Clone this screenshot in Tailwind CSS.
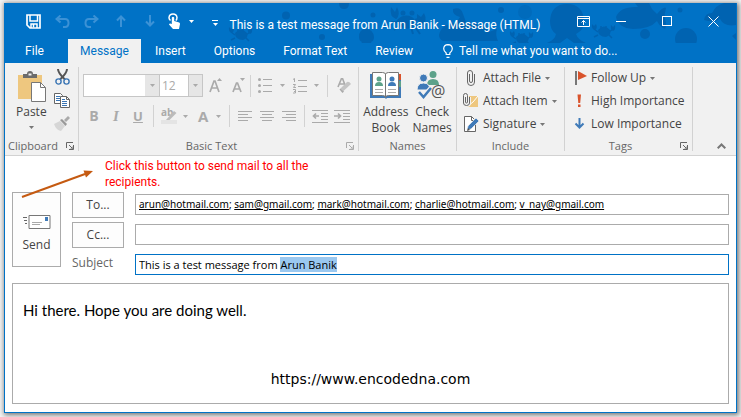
<!DOCTYPE html>
<html lang="en">
<head>
<meta charset="utf-8">
<title>This is a test message from Arun Banik - Message (HTML)</title>
<script src="https://cdn.jsdelivr.net/npm/@tailwindcss/browser@4"></script>
</head>
<body class="bg-[#f4f4f4] font-['Open_Sans','Noto_Sans',sans-serif] text-[12px] leading-4 text-[#444]">
<svg class="hidden">
  <symbol id="caret" viewBox="0 0 5 3"><path d="M0 0h5L2.500 3z" fill="currentColor"/></symbol>
  <symbol id="launcher" viewBox="0 0 8 8"><path d="M.5 6V.5H7M3 3l3 3M7.500 3v4.500H3M7 4.500V7H4.500" fill="none" stroke="currentColor"/></symbol>
</svg>
<div class="flex min-h-screen flex-col px-1 pt-[3px] pb-1">
<main class="flex flex-1 flex-col border border-[#0072c6] bg-white shadow-[1px_1px_5px_1px_#777]">

  <header class="relative -mt-px bg-[#0072c6] font-['Roboto','Open_Sans',sans-serif] text-white">
    <svg class="absolute top-0 right-0 h-10 w-[512px] text-[#0063b1]" viewBox="224 3 512 40" fill="currentColor" aria-hidden="true">
      <g id="crab"><path d="M235 33q6-7 12 0q2 5-4 7q-8 0-8-7z"/><path d="M235 35l-4-3M235 38l-4 2M246 35l4-3M246 38l3 3M238 32v-3M243 32v-3" stroke="currentColor" stroke-width="1.500"/><path d="M229 27l2 2 2-2q2 4-1 6-4-1-3-6zM248 28l2 2 2-2q1 5-2 6-3-2-2-6z"/></g>
      <circle cx="286" cy="15.500" r="4"/><path d="M339 3h10q0 6-5 6t-5-6z"/><circle cx="322" cy="37" r="3"/><circle cx="373" cy="15" r="2.500"/>
      <path d="M359 37q0-8 7-8t8 8q0 4-3 5 1 3 5 3v2h-6l-3-4-3 4h-6v-2q3-1 4-3-3-1-3-5z"/>
      <path d="M397 20q7-7 15-3 5 3 2 9-5 5-13 1-6-3-4-7z"/><circle cx="403" cy="13" r="2.500"/><circle cx="412" cy="13" r="2.500"/>
      <path d="M391 7l4 5 2-5q4 8-1 12-7-3-5-12zM417 14l4 3 3-4q4 8-2 12-6-4-5-11z"/><path d="M397 18l-5-3M398 22h-7M400 25l-6 5M414 25l6 9M411 27l2 7M415 20l6-2" stroke="currentColor" stroke-width="2"/>
      <path d="M439 35q2-11 17-12l4-6q-8-2-7-8 8-3 10 5l3 8q18 2 23 10l8-3q-2 6 1 12H443q-4-2-4-6z"/>
      <circle cx="501" cy="10" r="3"/><circle cx="525" cy="12" r="7" opacity=".5"/>
      <use href="#crab" transform="translate(281 4)"/><use href="#crab" transform="translate(363 -3)"/>
      <path d="M550 21q1-17 17-17t17 17q0 8-5 11l-3 2q2 6 10 9h-12l-7-5-7 5h-13q8-3 9-9-6-4-6-13z"/>
      <path d="M616 17q4-11 22-10l-3-4h14l3 6 5 5q7-8 9-6-2 6-1 11 2 6 0 10-5-2-8-8-7 8-24 8-15-1-17-12z"/>
      <circle cx="645" cy="34" r="5"/><circle cx="686" cy="39" r="11"/><circle cx="680" cy="10" r="2.500"/>
      <path d="M704 20q1-7 8-7 4-8 12-10h12v22q-12 2-16-6-6 4-16 1z"/><path d="M732 36l4-3v7z"/>
    </svg>
    <div class="relative flex h-9 items-center">
      <div class="flex items-center pl-[14px]">
        <button aria-label="Save" class="flex w-[29px] justify-center"><svg width="15" height="15" viewBox="0 0 15 15"><path d="M1 1h13v13H4l-3-3z" fill="none" stroke="#fff" stroke-width="1.700"/><path d="M4 1v6h7.500V1M5 14v-4h6v4M7.500 10.500v3" fill="none" stroke="#fff" stroke-width="1.500"/></svg></button>
        <button aria-label="Undo" class="flex w-[29px] justify-center text-[#3c92d6]"><svg width="15" height="13" viewBox="0 0 15 13" fill="none" stroke="currentColor" stroke-width="2"><path d="M5.500.5L1.500 4l4 3.500M2 4h8q3.500 0 3.500 4T10 12H8"/></svg></button>
        <button aria-label="Redo" class="flex w-[29px] justify-center text-[#3c92d6]"><svg width="15" height="13" viewBox="0 0 15 13" fill="none" stroke="currentColor" stroke-width="2"><path d="M9.500.5l4 3.500-4 3.500M13 4H5Q1.500 4 1.500 8T5 12h2"/></svg></button>
        <button aria-label="Previous item" class="flex w-[29px] justify-center text-[#3c92d6]"><svg width="10" height="12" viewBox="0 0 10 12" fill="none" stroke="currentColor" stroke-width="2"><path d="M5 12V1.500M1 5.500l4-4 4 4"/></svg></button>
        <button aria-label="Next item" class="flex w-[29px] justify-center text-[#3c92d6]"><svg width="10" height="12" viewBox="0 0 10 12" fill="none" stroke="currentColor" stroke-width="2"><path d="M5 0v10.500M1 6.500l4 4 4-4"/></svg></button>
        <button aria-label="Touch mode" class="flex items-center gap-2 pl-1"><svg width="13" height="17" viewBox="0 0 13 17"><path d="M2.500 7.500Q.8 6 1 4.500 1.500 1 5 1t4 3.500Q9 6.500 7.800 7.500" fill="none" stroke="#fff" stroke-width="1.500"/><path d="M3.800 4.500q1.200-1.500 2.400 0V8l5 1.500q1 .5.800 1.500l-1 5H5L1 11.500q.3-1.500 2.800-.5z" fill="#fff"/></svg><svg class="h-[3px] w-[5px]"><use href="#caret"/></svg></button>
        <button aria-label="Customize toolbar" class="flex flex-col items-center gap-[2px] pt-1 pl-[18px]"><span class="h-px w-[6px] bg-white"></span><svg class="h-[3px] w-[5px]"><use href="#caret"/></svg></button>
      </div>
      <h1 class="flex-1 pt-2 pr-4 text-center whitespace-nowrap">This is a test message from Arun Banik - Message (HTML)</h1>
      <button aria-label="Ribbon display options" class="flex w-[30px] justify-center"><svg width="13" height="11" viewBox="0 0 13 11" fill="none" stroke="#fff"><path d="M.5.5h12v10H.5zM.5 2.500h12M6.500 9V4.500M4.500 6.500l2-2 2 2"/></svg></button>
      <button aria-label="Minimize" class="flex w-[46px] justify-center"><span class="h-px w-[10px] bg-white"></span></button>
      <button aria-label="Maximize" class="flex w-[46px] justify-center"><span class="size-[10px] border border-white"></span></button>
      <button aria-label="Close" class="flex w-[46px] justify-center"><svg width="11" height="11" viewBox="0 0 11 11" stroke="#fff"><path d="M.5.5l10 10M10.500.5l-10 10"/></svg></button>
    </div>
    <nav class="relative flex h-6 items-center pr-4">
      <button class="w-[63px] pr-1">File</button>
      <button class="h-6 w-[73px] bg-[#f1f1f1] text-[#0072c6]">Message</button>
      <button class="px-[14px]">Insert</button>
      <button class="px-[14px]">Options</button>
      <button class="px-[14px]">Format Text</button>
      <button class="px-[14px]">Review</button>
      <button class="flex items-center gap-[6px] pl-4"><svg width="10" height="14" viewBox="0 0 10 14" fill="none" stroke="#fff" stroke-width="1.200"><path d="M3.200 10.500V9Q.7 7 .7 4.800.8.800 5 .7q4.200.1 4.300 4.100Q9.300 7 6.800 9v1.500zM3.500 13.300h3"/></svg>Tell me what you want to do...</button>
    </nav>
  </header>

  <section aria-label="Ribbon" class="flex h-[93px] border-b border-[#d2d2d2] bg-[#f1f1f1]">
    <div class="my-1 flex w-[74px] flex-col justify-between border-r border-[#d2d2d2]">
      <div class="flex justify-between pr-2 pl-[11px]">
        <button class="flex flex-col items-center pt-1">
          <svg width="30" height="31" viewBox="0 0 30 31"><path d="M2 4h24v24H2z" fill="#eec77f"/><path d="M7 7V3h4q0-3 3-3t3 3h4v4z" fill="#6b6b6b"/><path d="M12.500 2.500h3v2h-3z" fill="#f1f1f1"/><path d="M15.500 11.500h9l5 5v14h-14z" fill="#fff" stroke="#777"/><path d="M24.500 11.500v5h5" fill="none" stroke="#777"/></svg>
          <span class="pt-[2px]">Paste</span>
          <svg class="mt-[6px] h-[3px] w-[5px] text-[#777]"><use href="#caret"/></svg>
        </button>
        <div class="flex flex-col items-center gap-2 pt-[2px]">
          <button aria-label="Cut"><svg class="block" width="15" height="16" viewBox="0 0 15 16" fill="none"><path d="M3 0q0 4 7 10.500M12 0q0 4-7 10.500" stroke="#555" stroke-width="2"/><circle cx="3.500" cy="12.500" r="2.600" stroke="#3a75b4" stroke-width="1.400"/><circle cx="11.500" cy="12.500" r="2.600" stroke="#3a75b4" stroke-width="1.400"/></svg></button>
          <button aria-label="Copy"><svg class="block" width="16" height="15" viewBox="0 0 16 15" fill="#fff" stroke="#666"><path d="M.5.5h6l2 2v8h-8z"/><path d="M2 3.500h4M2 5.500h4M2 7.500h4" stroke="#3a75b4"/><path d="M6.500 3.500h6l3 3v8h-9z"/><path d="M12.500 3.500v3h3" fill="none"/><path d="M8 8.500h5M8 10.500h5M8 12.500h5M8 6.500h3" stroke="#3a75b4"/></svg></button>
          <button aria-label="Format painter"><svg class="block" width="16" height="15" viewBox="0 0 16 15"><path d="M0 8l6-3 5 5-4 5q-5-1-7-7z" fill="#d6d6d6"/><path d="M6 4l2-1 5 5-1.500 2z" fill="#999"/><path d="M10 4l4-4 2 2-4 4z" fill="#aaa"/></svg></button>
        </div>
      </div>
      <div class="flex h-[10px] items-center justify-between pr-1 pl-[3px] text-[11px] text-[#666]">Clipboard<button aria-label="Clipboard dialog"><svg class="block size-2"><use href="#launcher"/></svg></button></div>
    </div>

    <div class="my-1 flex w-[280px] flex-col justify-between border-r border-[#d2d2d2] pl-1 text-[#aaa]">
      <div class="flex flex-col gap-2 pt-[7px]">
        <div class="flex h-[23px] items-center">
          <span class="relative flex h-[23px] w-[77px] border border-[#c6c6c6] bg-white"><select aria-label="Font" class="w-full appearance-none"><option></option></select><span class="pointer-events-none absolute inset-y-0 right-0 flex w-[14px] items-center justify-center bg-[#e6e6e6]"><svg class="h-[3px] w-[5px]"><use href="#caret"/></svg></span></span>
          <span class="relative -ml-px flex h-[23px] w-[44px] border border-[#c6c6c6] bg-white"><select aria-label="Font size" class="w-full appearance-none pl-[2px]"><option>12</option></select><span class="pointer-events-none absolute inset-y-0 right-0 flex w-[14px] items-center justify-center border-l border-[#c6c6c6] bg-[#e6e6e6]"><svg class="h-[3px] w-[5px]"><use href="#caret"/></svg></span></span>
          <button aria-label="Grow font" class="pl-[6px]"><svg class="block" width="14" height="15" viewBox="0 0 14 15"><path d="M1 14L5 3h1l4 11M2.500 10h6" fill="none" stroke="currentColor" stroke-width="1.700"/><path d="M8 3h5l-2.500-3z" fill="currentColor"/></svg></button>
          <button aria-label="Shrink font" class="pl-[9px]"><svg class="block" width="14" height="15" viewBox="0 0 14 15"><path d="M1 14L4.500 5h1L9 14M2.500 11h5" fill="none" stroke="currentColor" stroke-width="1.700"/><path d="M8 0h5l-2.500 3z" fill="currentColor"/></svg></button>
          <span class="ml-1 h-[22px] w-px bg-[#d2d2d2]"></span>
          <button aria-label="Bullets" class="flex items-center gap-2 pl-[7px]"><svg width="14" height="15" viewBox="0 0 14 15" fill="currentColor"><circle cx="1.500" cy="1.500" r="1.500"/><circle cx="1.500" cy="7.500" r="1.500"/><circle cx="1.500" cy="13.500" r="1.500"/><path d="M5 1h9v1H5zM5 7h9v1H5zM5 13h9v1H5z"/></svg><svg class="h-[3px] w-[5px]"><use href="#caret"/></svg></button>
          <button aria-label="Numbering" class="flex items-center gap-[7px] pl-2"><svg width="14" height="16" viewBox="0 0 14 16" fill="none" stroke="currentColor"><path d="M0 1.500L1.500.5V4M0 6.500h2.500l-2 3H3M0 11.500h2.500V15H0M1 13.500h1.500M5 2.500h9M5 8.500h9M5 13.500h9"/></svg><svg class="h-[3px] w-[5px]"><use href="#caret"/></svg></button>
          <span class="ml-2 h-[22px] w-px bg-[#d2d2d2]"></span>
          <button aria-label="Clear formatting" class="pl-[9px]"><svg class="block" width="14" height="15" viewBox="0 0 14 15"><path d="M1 9L4.500.500h1L8 7M2 6h5" fill="none" stroke="currentColor" stroke-width="1.600"/><path d="M3.500 10.500L10 4q2-1 4 2L6.500 13z" fill="#c4c4c4"/><path d="M2.500 11.500l1-1 3.500 3-1.500 1.500z" fill="#aaa"/></svg></button>
        </div>
        <div class="flex h-[22px] items-center">
          <button aria-label="Bold" class="w-[22px] text-[14px] font-bold">B</button>
          <button aria-label="Italic" class="w-[22px] font-['Liberation_Serif',serif] text-[15px] font-bold italic">I</button>
          <button aria-label="Underline" class="w-[22px] text-[13px] font-bold underline">U</button>
          <span class="ml-1 h-[22px] w-px bg-[#d2d2d2]"></span>
          <button aria-label="Highlight" class="flex items-center gap-[6px] pl-[7px]"><svg class="overflow-visible" width="16" height="16" viewBox="0 0 16 16"><text x="0" y="8" font-size="10" font-weight="bold" fill="currentColor">ab</text><path d="M5 12l8-9 2.500 2-7 7z" fill="#bbb"/><path d="M0 12h16v4H0z" fill="#e4e4e4"/></svg><svg class="h-[3px] w-[5px]"><use href="#caret"/></svg></button>
          <button aria-label="Font color" class="flex items-center gap-2 pl-[10px] text-[15px] font-bold">A<svg class="h-[3px] w-[5px]"><use href="#caret"/></svg></button>
          <span class="ml-2 h-[22px] w-px bg-[#d2d2d2]"></span>
          <button aria-label="Align left" class="pl-2"><svg class="block" width="14" height="11" viewBox="0 0 14 11" fill="currentColor"><path d="M0 0h14v1H0zM0 3h10v1H0zM0 6h14v1H0zM0 9h10v1H0z"/></svg></button>
          <button aria-label="Center" class="pl-2"><svg class="block" width="14" height="11" viewBox="0 0 14 11" fill="currentColor"><path d="M0 0h14v1H0zM2 3h10v1H2zM0 6h14v1H0zM2 9h10v1H2z"/></svg></button>
          <button aria-label="Align right" class="pl-2"><svg class="block" width="14" height="11" viewBox="0 0 14 11" fill="currentColor"><path d="M0 0h14v1H0zM4 3h10v1H4zM0 6h14v1H0zM4 9h10v1H4z"/></svg></button>
          <span class="ml-2 h-[22px] w-px bg-[#d2d2d2]"></span>
          <button aria-label="Decrease indent" class="pl-[7px]"><svg class="block" width="16" height="13" viewBox="0 0 16 13" fill="currentColor"><path d="M0 0h16v1H0zM9 3h7v1H9zM9 6h7v1H9zM9 9h7v1H9zM0 12h16v1H0z"/><path d="M7 6H1.500M4 3.500L1.500 6 4 8.500" fill="none" stroke="currentColor" stroke-width="1.700"/></svg></button>
          <button aria-label="Increase indent" class="pl-[6px]"><svg class="block" width="16" height="13" viewBox="0 0 16 13" fill="currentColor"><path d="M0 0h16v1H0zM9 3h7v1H9zM9 6h7v1H9zM9 9h7v1H9zM0 12h16v1H0z"/><path d="M0 6h6M4 3.500L6.500 6 4 8.500" fill="none" stroke="currentColor" stroke-width="1.700"/></svg></button>
        </div>
      </div>
      <div class="flex h-[10px] items-center pr-1 text-[11px]"><span class="flex-1 pr-[6px] text-center text-[#666]">Basic Text</span><button aria-label="Basic text dialog"><svg class="block size-2"><use href="#launcher"/></svg></button></div>
    </div>

    <div class="my-1 flex w-[98px] flex-col justify-between border-r border-[#d2d2d2]">
      <div class="flex justify-center gap-1 pt-1">
        <button class="flex flex-col items-center"><svg width="32" height="30" viewBox="0 0 32 30"><path d="M0 3h31v24H17l-1 1-1-1H0z" fill="#3f7ab8"/><path d="M29 3h2v6h-2z" fill="#d9532c"/><path d="M29 10h2v6h-2z" fill="#5da28a"/><path d="M2.500 1.500h10q3 0 3 2 0-2 3-2h10v23h-10q-3 0-3 2 0-2-3-2h-10z" fill="#fff" stroke="#777"/><path d="M15.500 3v23" stroke="#777"/><circle cx="9" cy="8" r="2.500" fill="#5da28a"/><path d="M5 15q0-4 4-4t4 4z" fill="#5da28a"/><circle cx="22" cy="8" r="2.500" fill="#3f7ab8"/><path d="M18 15q0-4 4-4t4 4z" fill="#3f7ab8"/><path d="M5 18.500h8M5 21.500h8M18 18.500h8M18 21.500h8" stroke="#aaa"/></svg><span class="pt-[3px]">Address<br>Book</span></button>
        <button class="flex flex-col items-center"><svg width="32" height="30" viewBox="0 0 32 30"><circle cx="17" cy="3.500" r="3.500" fill="#5da28a"/><path d="M11 14q0-6 6-6t6 6z" fill="#5da28a"/><circle cx="7.500" cy="7" r="4" fill="#3f7ab8" stroke="#f1f1f1"/><path d="M1 19q0-7 6.500-7t6.500 7z" fill="#3f7ab8" stroke="#f1f1f1"/><path d="M3 21l4.500 5L15 17" fill="none" stroke="#f1f1f1" stroke-width="5"/><path d="M3 21l4.500 5L15 17" fill="none" stroke="#3f7ab8" stroke-width="2.500"/><text x="15" y="26" font-size="16" fill="#555">@</text></svg><span class="pt-[3px]">Check<br>Names</span></button>
      </div>
      <div class="flex h-[10px] items-center justify-center text-[11px] text-[#666]">Names</div>
    </div>

    <div class="my-1 flex w-[108px] flex-col justify-between border-r border-[#d2d2d2] pl-[6px]">
      <div class="flex flex-col gap-[7px] pt-[3px]">
        <button class="flex h-4 items-center gap-1 whitespace-nowrap"><svg width="16" height="16" viewBox="0 0 16 16" fill="none" stroke="#666"><path d="M6.500 4v7q0 1.500 1.500 1.500T9.500 11V3Q9.500.5 7 .5T4.500 3v9q0 3.500 3.500 3.500t3.500-3.500V4"/></svg>Attach File<svg class="h-[3px] w-[5px] text-[#777]"><use href="#caret"/></svg></button>
        <button class="flex h-4 items-center gap-1 whitespace-nowrap"><svg width="16" height="16" viewBox="0 0 16 16" fill="none" stroke="#666"><path d="M4 3h11v11H4z" fill="#eec77f" stroke="none"/><path d="M5 13l5-4 5-6" stroke="#fff"/><path d="M2.500 4v5q0 1 1 1t1-1V2.500q0-2-2-2t-2 2V10q0 2.500 3 2.500t3-2.500V4" stroke="#f1f1f1" stroke-width="3"/><path d="M2.500 4v5q0 1 1 1t1-1V2.500q0-2-2-2t-2 2V10q0 2.500 3 2.500t3-2.500V4"/></svg>Attach Item<svg class="h-[3px] w-[5px] text-[#777]"><use href="#caret"/></svg></button>
        <button class="flex h-4 items-center gap-1 whitespace-nowrap"><svg width="16" height="16" viewBox="0 0 16 16"><path d="M1.500.5h7l4 4v11h-11z" fill="#fff" stroke="#666"/><path d="M8.500.5v4h4" fill="none" stroke="#666"/><path d="M4 14l1-4 8-8 3 3-8 8z" fill="#3f7ab8" stroke="#f1f1f1" stroke-width=".7"/><path d="M4 15l1-3 2 2z" fill="#555"/></svg>Signature<svg class="h-[3px] w-[5px] text-[#777]"><use href="#caret"/></svg></button>
      </div>
      <div class="flex h-[10px] items-center justify-center pr-[6px] text-[11px] text-[#666]">Include</div>
    </div>

    <div class="my-1 flex w-[128px] flex-col justify-between border-r border-[#d2d2d2] pl-[6px]">
      <div class="flex flex-col gap-[7px] pt-[3px]">
        <button class="flex h-4 items-center gap-1 whitespace-nowrap"><svg width="16" height="16" viewBox="0 0 16 16"><path d="M4 1h2v14H4z" fill="#777"/><path d="M7 1l9 5-9 4z" fill="#d9532c"/></svg>Follow Up<svg class="h-[3px] w-[5px] text-[#777]"><use href="#caret"/></svg></button>
        <button class="flex h-4 items-center gap-1 whitespace-nowrap"><svg width="16" height="16" viewBox="0 0 16 16" fill="#d9532c"><path d="M6.500 1.500h3.500l-.8 8.500H7.300zM7 11.500h2.500V14H7z"/></svg>High Importance</button>
        <button class="flex h-4 items-center gap-1 whitespace-nowrap"><svg width="16" height="16" viewBox="0 0 16 16" fill="none" stroke="#3f7ab8" stroke-width="2"><path d="M8.500 2v10M4.500 7.500l4 4 4-4"/></svg>Low Importance</button>
      </div>
      <div class="flex h-[10px] items-center pr-1 text-[11px] text-[#666]"><span class="flex-1 pr-[10px] text-center">Tags</span><button aria-label="Tags dialog"><svg class="block size-2"><use href="#launcher"/></svg></button></div>
    </div>
    <div class="flex flex-1 items-end justify-end pr-[10px] pb-[6px]"><button aria-label="Collapse ribbon"><svg class="block" width="9" height="6" viewBox="0 0 9 6" fill="none" stroke="#777" stroke-width="2"><path d="M.7 5.300L4.500 1.500l3.800 3.800"/></svg></button></div>
  </section>

  <section class="relative flex flex-1 flex-col px-[7px] pb-2">
    <svg class="absolute top-3 left-4 h-[31px] w-[74px]" viewBox="0 0 74 31" aria-hidden="true"><path d="M1 29L64 6" stroke="#c55a11" stroke-width="2"/><path d="M72 3L65 9.500 62.500 2.500z" fill="#c55a11"/></svg>
    <p class="h-9 w-[320px] pt-[2px] pl-[93px] font-['Roboto',sans-serif] text-[12px] leading-4 text-[#f00]">Click this button to send mail to all the recipients.</p>

    <form class="grid grid-cols-[49px_52px_1fr] gap-x-[11px] text-[11px]">
      <button type="button" class="flex h-[75px] flex-col items-center justify-center gap-2 border border-[#ababab] bg-[#fdfdfd] pt-2 text-[12px]"><svg width="28" height="14" viewBox="0 0 28 14"><path d="M6 .5h21v13H6z" fill="#fff" stroke="#777"/><path d="M22 2h3v4h-3z" fill="#3f7ab8"/><path d="M9 7.500h10M9 9.500h8" stroke="#aaa"/><path d="M0 2.500h4M1 5.500h3M2 8.500h2" stroke="#666"/></svg>Send</button>
      <div class="flex flex-col gap-1 text-[12px]">
        <button type="button" id="to" class="h-[26px] border border-[#ababab] bg-[#fdfdfd]">To...</button>
        <button type="button" id="cc" class="h-[26px] border border-[#ababab] bg-[#fdfdfd]">Cc...</button>
        <label for="subject" class="pt-[3px] text-[#666]">Subject</label>
      </div>
      <div class="flex flex-col gap-[9px] pt-[2px] text-black">
        <div role="textbox" aria-labelledby="to" contenteditable="true" class="h-[21px] overflow-hidden border border-[#ababab] px-[3px] font-['Noto_Sans',sans-serif] text-[10px] leading-[19px] whitespace-nowrap outline-none"><a class="underline" href="mailto:arun@hotmail.com">arun@hotmail.com</a>; <a class="underline" href="mailto:sam@gmail.com">sam@gmail.com</a>; <a class="underline" href="mailto:mark@hotmail.com">mark@hotmail.com</a>; <a class="underline" href="mailto:charlie@hotmail.com">charlie@hotmail.com</a>; <a class="underline" href="mailto:v_nay@gmail.com">v_nay@gmail.com</a></div>
        <input type="text" aria-labelledby="cc" class="h-[21px] border border-[#ababab] px-[3px] outline-none">
        <input type="text" id="subject" value="This is a test message from Arun Banik" class="h-[21px] border border-[#0072c6] px-[3px] outline-none selection:bg-[#9ac8f0] selection:text-black">
      </div>
    </form>

    <div class="mt-2 flex flex-1 flex-col border border-[#ababab] text-black">
      <textarea aria-label="Message body" class="flex-1 resize-none px-[10px] pt-4 font-['Lato',sans-serif] text-[15px] leading-5 outline-none">Hi there. Hope you are doing well.</textarea>
      <a href="https://www.encodedna.com" class="pb-4 text-center font-['DejaVu_Sans',sans-serif] text-[14px]">https://www.encodedna.com</a>
    </div>
  </section>
</main>
</div>
<script>
  const subject = document.getElementById('subject');
  subject.focus();
  subject.setSelectionRange(28, 38);
</script>
</body>
</html>
